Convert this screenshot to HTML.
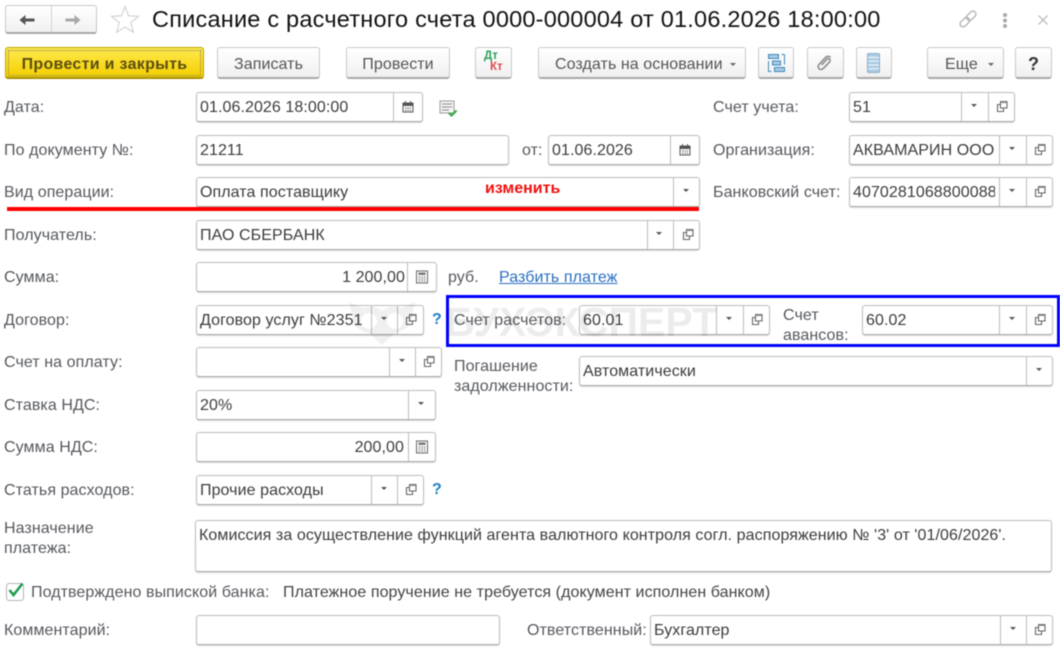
<!DOCTYPE html>
<html lang="ru"><head><meta charset="utf-8"><title>Списание с расчетного счета</title>
<style>
html,body{margin:0;padding:0;background:#fff}
#p{position:relative;width:1060px;height:649px;overflow:hidden;background:#fff;font:16px "Liberation Sans",sans-serif;color:#4b4b4b;filter:blur(.4px)}
#p>*{position:absolute;box-sizing:border-box}
.l{white-space:nowrap;line-height:18px;color:#55585e;letter-spacing:.08px;margin-top:1px}
.f{height:30px;background:#fff;border:1px solid #bdbdbd;border-bottom-color:#aaa;border-radius:3px;box-shadow:0 1px 1px #d5d5d5;line-height:30px;padding-left:3px;color:#3c3c3c;white-space:nowrap;overflow:hidden;letter-spacing:.08px}
.s{position:absolute;top:0;bottom:0;width:1px;background:#bdbdbd}
.t{position:absolute;left:3px;top:0;overflow:hidden}
.a{position:absolute;top:11px;width:0;height:0;border-left:3.5px solid transparent;border-right:3.5px solid transparent;border-top:3.5px solid #555}
.o{position:absolute;top:7px}
.b{height:32px;background:linear-gradient(#fff,#f0f0f0);border:1px solid #c8c8c8;border-bottom:2px solid #a8a8a8;border-radius:3px;text-align:center;line-height:33px;color:#555;letter-spacing:.08px;white-space:nowrap}
.q{color:#1f7fc4;font-weight:bold;font-size:16px;line-height:18px}
</style></head><body>
<div id="p">
<svg width="0" height="0" style="position:absolute"><defs>
<symbol id="op" viewBox="0 0 14 14"><path d="M5.500 1.500h6.500v6.500H5.500zM5.500 4.500H2.500v7h6V8" fill="none" stroke="#666" stroke-width="1.100"/><path d="M5.500 1.500h6.500v1.500H5.500z" fill="#888"/></symbol>
<symbol id="cal" viewBox="0 0 14 14"><path d="M2 3h10v9H2z" fill="#fff" stroke="#555"/><path d="M2 2.500h10V6H2zM4 1h1v2H4zM9 1h1v2H9z" fill="#555"/><path d="M4 7.500h1.500v1H4zM6.300 7.500h1.500v1H6.300zM8.600 7.500h1.500v1H8.600zM4 9.700h1.500v1H4zM6.300 9.700h1.500v1H6.300zM8.600 9.700h1.500v1H8.600z" fill="#666"/></symbol>
<symbol id="calc" viewBox="0 0 14 14"><path d="M1.500 1h11v12h-11z" fill="#fff" stroke="#666"/><path d="M3.500 2.500h7V5h-7z" fill="#777"/><path d="M3.500 6.500h1.700v1H3.500zM6.200 6.500h1.700v1H6.200zM8.800 6.500h1.700v1H8.800zM3.500 8.500h1.700v1H3.500zM6.200 8.500h1.700v1H6.200zM8.800 8.500h1.700v1H8.800zM3.500 10.500h1.700v1H3.500zM6.200 10.500h1.700v1H6.200zM8.800 10.500h1.700v1H8.800z" fill="#777"/></symbol>
</defs></svg>

<!-- top nav -->
<div style="left:5px;top:5px;width:92px;height:29px;background:linear-gradient(#fff,#f1f1f1);border:1px solid #c8c8c8;border-bottom:2px solid #a8a8a8;border-radius:3px"></div>
<div style="left:51px;top:6px;width:1px;height:26px;background:#d0d0d0"></div>
<svg style="left:18px;top:12px" width="20" height="16" viewBox="0 0 20 16"><path d="M1.500 8l6-5v3.500h9v3h-9V13z" fill="#555"/></svg>
<svg style="left:62px;top:12px" width="20" height="16" viewBox="0 0 20 16"><path d="M18.500 8l-6-5v3.500h-9v3h9V13z" fill="#a8a8a8"/></svg>
<svg style="left:110px;top:5px" width="30" height="29" viewBox="0 0 30 29"><path d="M15 1.500l3.600 9.300 10 .5-7.800 6.300 2.600 9.700L15 22l-8.400 5.300 2.600-9.700-7.800-6.300 10-.5z" fill="#fff" stroke="#d0d0d0" stroke-width="1.100"/></svg>
<div style="left:152px;top:4px;line-height:30px;font-size:23.5px;color:#111;white-space:nowrap;letter-spacing:.22px">Списание с расчетного счета 0000-000004 от 01.06.2026 18:00:00</div>
<svg style="left:957px;top:8px" width="22" height="22" viewBox="0 0 22 22"><g fill="none" stroke="#b0b0b0" stroke-width="1.300" transform="rotate(-45 11 11)"><rect x="1" y="8" width="11" height="6" rx="3"/><rect x="10" y="8" width="11" height="6" rx="3"/></g></svg>
<div style="left:1003px;top:13px;width:4px;height:4px;border-radius:2px;background:#a8a8a8;box-shadow:0 5.500px 0 #a8a8a8,0 11px 0 #a8a8a8"></div>
<svg style="left:1037px;top:14px" width="12" height="12" viewBox="0 0 12 12"><path d="M1.500 1.500l9 9M10.500 1.500l-9 9" stroke="#b5b5b5" stroke-width="1.200"/></svg>

<!-- toolbar -->
<div class="b" style="left:5px;top:47px;width:199px;background:linear-gradient(#ffe94d,#f5cf00);border:1px solid #c0a200;border-bottom:2px solid #a88e00;font-weight:bold;color:#5a4f10;letter-spacing:.3px;outline:1px dotted #7a7a50;outline-offset:-4px">Провести и закрыть</div>
<div class="b" style="left:217px;top:47px;width:103px">Записать</div>
<div class="b" style="left:346px;top:47px;width:104px">Провести</div>
<div class="b" style="left:475px;top:47px;width:37px"></div>
<div style="left:484px;top:50px;font-size:11.500px;font-weight:bold;color:#2e9e5c;line-height:12px">Дт</div>
<div style="left:490px;top:61px;font-size:11.500px;font-weight:bold;color:#e0484e;line-height:12px">Кт</div>
<div class="b" style="left:538px;top:47px;width:208px;text-align:left;padding-left:16px">Создать на основании</div>
<div class="a" style="left:730px;top:63px;border-top-color:#666"></div>
<div class="b" style="left:758px;top:47px;width:36px"></div>
<svg style="left:767px;top:53px" width="19" height="20" viewBox="0 0 19 20"><g fill="#a9cbe3" stroke="#3f88b8"><rect x="1.500" y="1.500" width="10" height="4"/><rect x="5.500" y="8" width="8" height="4"/><rect x="7.500" y="14.500" width="10" height="4"/></g><path d="M17.500 1.500h-3M17.500 1.500v10M1.500 8v10.500h3" fill="none" stroke="#3f88b8"/></svg>
<div class="b" style="left:807px;top:47px;width:37px"></div>
<svg style="left:816px;top:54px" width="18" height="18" viewBox="0 0 18 18"><path d="M14.500 3.500c-1.500-1.800-3.500-1.500-5 0L3 10.500c-1.500 1.600-.8 3.600.3 4.400 1.200.9 3 .7 4.200-.6l6-6.400c.9-1 .7-2.200 0-2.800-.8-.7-2-.6-2.900.3l-5 5.500" fill="none" stroke="#8a8a8a" stroke-width="1.600"/></svg>
<div class="b" style="left:856px;top:47px;width:36px"></div>
<svg style="left:866px;top:53px" width="15" height="20" viewBox="0 0 15 20"><rect x="1.500" y=".5" width="12" height="19" rx="1" fill="#a9cbe3" stroke="#8cb0c8"/><path d="M2 4.500h11M2 8.200h11M2 12h11M2 15.700h11" stroke="#f0f6fa" stroke-width="1.200"/></svg>
<div class="b" style="left:927px;top:47px;width:77px;text-align:left;padding-left:17px">Еще</div>
<div class="a" style="left:988px;top:63px;border-top-color:#666"></div>
<div class="b" style="left:1015px;top:47px;width:37px;font-weight:bold;font-size:18px;color:#333">?</div>

<!-- left labels -->
<div class="l" style="left:4px;top:98px">Дата:</div>
<div class="l" style="left:4px;top:141px">По документу №:</div>
<div class="l" style="left:4px;top:183px">Вид операции:</div>
<div class="l" style="left:4px;top:226px">Получатель:</div>
<div class="l" style="left:4px;top:268px">Сумма:</div>
<div class="l" style="left:4px;top:311px">Договор:</div>
<div class="l" style="left:4px;top:353px">Счет на оплату:</div>
<div class="l" style="left:4px;top:396px">Ставка НДС:</div>
<div class="l" style="left:4px;top:438px">Сумма НДС:</div>
<div class="l" style="left:4px;top:481px">Статья расходов:</div>
<div class="l" style="left:4px;top:519px">Назначение</div>
<div class="l" style="left:4px;top:539px">платежа:</div>
<div class="l" style="left:4px;top:621px">Комментарий:</div>

<!-- date -->
<div class="f" style="left:196px;top:92px;width:227px">01.06.2026 18:00:00<i class="s" style="left:196px"></i><svg class="o" style="left:204px" width="14" height="14"><use href="#cal"/></svg></div>
<svg style="left:439px;top:100px" width="19" height="18" viewBox="0 0 19 18"><rect x="1" y="1" width="14" height="12" fill="#f4f4f4" stroke="#9a9a9a"/><path d="M3 4h10M3 7h10M3 10h7" stroke="#8a8a8a"/><path d="M10 13l2.500 2.500 5-5" fill="none" stroke="#3aa648" stroke-width="2.200"/></svg>

<div class="f" style="left:196px;top:135px;width:313px">21211</div>
<div class="l" style="left:522px;top:141px">от:</div>
<div class="f" style="left:548px;top:135px;width:152px">01.06.2026<i class="s" style="left:121px"></i><svg class="o" style="left:129px" width="14" height="14"><use href="#cal"/></svg></div>

<div class="f" style="left:196px;top:177px;width:504px">Оплата поставщику<i class="s" style="left:476px"></i><i class="a" style="left:486px"></i></div>
<div style="left:485px;top:180px;font-weight:bold;font-size:16px;color:#f01010;line-height:18px;white-space:nowrap">изменить</div>
<div style="left:7px;top:207px;width:692px;height:3.500px;background:#f00"></div>

<div class="f" style="left:196px;top:220px;width:504px">ПАО СБЕРБАНК<i class="s" style="left:450px"></i><i class="a" style="left:459px"></i><i class="s" style="left:476px"></i><svg class="o" style="left:484px" width="14" height="14"><use href="#op"/></svg></div>

<div class="f" style="left:196px;top:262px;width:241px;text-align:right;padding-right:31px">1 200,00<i class="s" style="left:210px"></i><svg class="o" style="left:218px" width="14" height="14"><use href="#calc"/></svg></div>
<div class="l" style="left:448px;top:268px">руб.</div>
<div class="l" style="left:499px;top:268px;color:#2a6fc0;text-decoration:underline">Разбить платеж</div>

<div class="f" style="left:196px;top:305px;width:228px"><span class="t" style="width:170px">Договор услуг №2351</span><i class="s" style="left:174px"></i><i class="a" style="left:184px"></i><i class="s" style="left:200px"></i><svg class="o" style="left:207px" width="14" height="14"><use href="#op"/></svg></div>
<div class="q" style="left:432px;top:311px">?</div>

<div class="f" style="left:196px;top:347px;width:246px">&nbsp;<i class="s" style="left:192px"></i><i class="a" style="left:202px"></i><i class="s" style="left:218px"></i><svg class="o" style="left:225px" width="14" height="14"><use href="#op"/></svg></div>

<div class="f" style="left:196px;top:390px;width:240px">20%<i class="s" style="left:211px"></i><i class="a" style="left:221px"></i></div>

<div class="f" style="left:196px;top:432px;width:240px;text-align:right;padding-right:31px">200,00<i class="s" style="left:211px"></i><svg class="o" style="left:218px" width="14" height="14"><use href="#calc"/></svg></div>

<div class="f" style="left:196px;top:475px;width:228px">Прочие расходы<i class="s" style="left:174px"></i><i class="a" style="left:184px"></i><i class="s" style="left:200px"></i><svg class="o" style="left:207px" width="14" height="14"><use href="#op"/></svg></div>
<div class="q" style="left:432px;top:481px">?</div>

<div class="f" style="left:195px;top:520px;width:857px;height:52px">Комиссия за осуществление функций агента валютного контроля согл. распоряжению № '3' от '01/06/2026'.</div>

<!-- right column -->
<div class="l" style="left:713px;top:98px">Счет учета:</div>
<div class="f" style="left:849px;top:92px;width:166px">51<i class="s" style="left:111px"></i><i class="a" style="left:121px"></i><i class="s" style="left:138px"></i><svg class="o" style="left:145px" width="14" height="14"><use href="#op"/></svg></div>
<div class="l" style="left:713px;top:141px">Организация:</div>
<div class="f" style="left:849px;top:135px;width:204px"><span class="t" style="width:142px">АКВАМАРИН ООО</span><i class="s" style="left:149px"></i><i class="a" style="left:159px"></i><i class="s" style="left:176px"></i><svg class="o" style="left:183px" width="14" height="14"><use href="#op"/></svg></div>
<div class="l" style="left:713px;top:183px">Банковский счет:</div>
<div class="f" style="left:849px;top:177px;width:204px"><span class="t" style="width:142px">40702810688000888</span><i class="s" style="left:149px"></i><i class="a" style="left:159px"></i><i class="s" style="left:176px"></i><svg class="o" style="left:183px" width="14" height="14"><use href="#op"/></svg></div>

<!-- blue box -->
<div style="left:446px;top:295px;width:614px;height:52px;border:3px solid #00f"></div>
<div class="l" style="left:454px;top:311px">Счет расчетов:</div>
<div class="f" style="left:579px;top:305px;width:191px">60.01<i class="s" style="left:136px"></i><i class="a" style="left:146px"></i><i class="s" style="left:163px"></i><svg class="o" style="left:170px" width="14" height="14"><use href="#op"/></svg></div>
<div class="l" style="left:783px;top:306px">Счет</div>
<div class="l" style="left:783px;top:326px">авансов:</div>
<div class="f" style="left:862px;top:305px;width:191px">60.02<i class="s" style="left:136px"></i><i class="a" style="left:146px"></i><i class="s" style="left:163px"></i><svg class="o" style="left:170px" width="14" height="14"><use href="#op"/></svg></div>

<div class="l" style="left:454px;top:357px">Погашение</div>
<div class="l" style="left:454px;top:377px">задолженности:</div>
<div class="f" style="left:579px;top:356px;width:474px">Автоматически<i class="s" style="left:446px"></i><i class="a" style="left:456px"></i></div>

<!-- watermark above fields -->
<div style="left:445px;top:297px;font-size:41px;font-weight:bold;line-height:50px;color:rgba(0,0,0,.075);white-space:nowrap">БУХЭКСПЕРТ</div>
<svg style="left:347px;top:300px" width="70" height="46" viewBox="0 0 70 46"><path fill-rule="evenodd" d="M2 2l14 6c6-2 14-2 19 3 5-5 13-5 19-3l14-6-3 14c0 10-8 15-17 17l-13 12-13-12C13 31 5 26 5 16zM22 13a8 8 0 1 0 .01 0zM48 13a8 8 0 1 0 .01 0z" fill="rgba(0,0,0,.06)"/></svg>

<!-- bottom -->
<div style="left:6px;top:583px;width:18px;height:18px;border:1px solid #b5b5b5;border-radius:3px;background:#fff"></div>
<svg style="left:7px;top:581px" width="19" height="18" viewBox="0 0 19 18"><path d="M2.500 9l4 5L15.500 2.500" fill="none" stroke="#1f9e50" stroke-width="2.600"/></svg>
<div class="l" style="left:31px;top:583px">Подтверждено выпиской банка:</div>
<div class="l" style="left:283px;top:583px;color:#444">Платежное поручение не требуется (документ исполнен банком)</div>
<div class="f" style="left:196px;top:615px;width:304px">&nbsp;</div>
<div class="l" style="left:527px;top:621px">Ответственный:</div>
<div class="f" style="left:650px;top:615px;width:403px">Бухгалтер<i class="s" style="left:349px"></i><i class="a" style="left:359px"></i><i class="s" style="left:375px"></i><svg class="o" style="left:382px" width="14" height="14"><use href="#op"/></svg></div>
</div>
</body></html>
